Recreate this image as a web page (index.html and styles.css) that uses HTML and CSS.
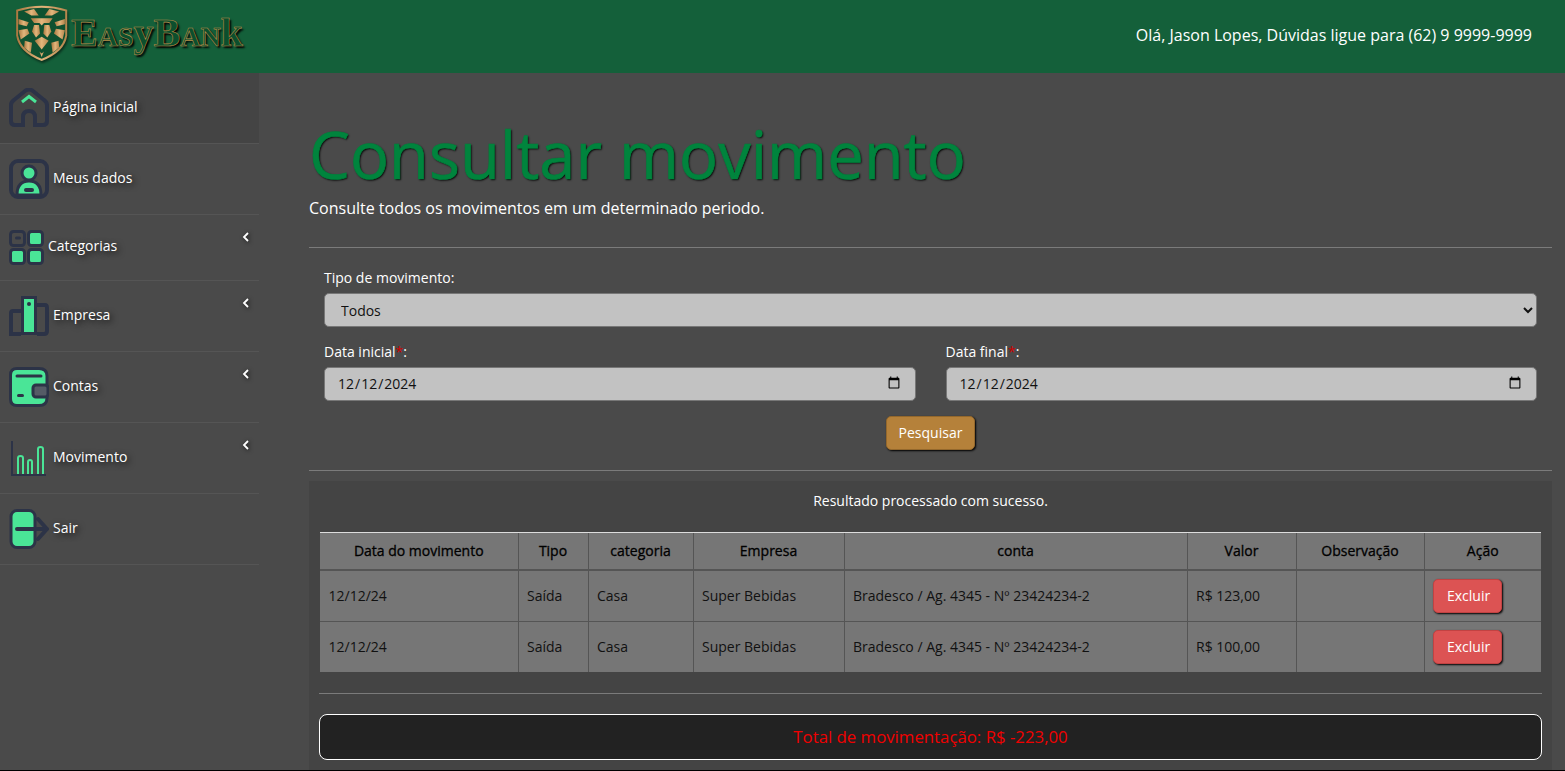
FILE: index.html
```html
<!DOCTYPE html>
<html lang="pt-BR">
<head>
    <meta charset="UTF-8">
    <meta name="viewport" content="width=device-width, initial-scale=1.0">
    <title>EasyBank - Consultar movimento</title>
    <link rel="stylesheet" href="styles.css">
</head>
<body>
    <header class="topbar">
        <a class="brand" href="#">
            <svg class="brand-shield" viewBox="15 15 165 175">
                <defs>
                    <linearGradient id="gold" x1="0" y1="0" x2="1" y2="0">
                        <stop offset="0" stop-color="#a9773f"/>
                        <stop offset="0.5" stop-color="#e3b67c"/>
                        <stop offset="1" stop-color="#b5854c"/>
                    </linearGradient>
                </defs>
                <path d="M18 32 Q95 8 172 32 L172 110 Q165 160 95 187 Q25 160 18 110Z" fill="url(#gold)"/>
                <path d="M24 37 Q95 16 166 37 L166 110 Q158 155 95 180 Q32 155 24 110Z" fill="#0f5130"/>
                <g fill="url(#gold)">
                    <path d="M42 38 L72 30 L86 50 L64 50Z"/>
                    <path d="M148 38 L118 30 L104 50 L126 50Z"/>
                    <path d="M25 60 L56 70 L50 82 L25 76Z"/>
                    <path d="M165 60 L134 70 L140 82 L165 76Z"/>
                    <path d="M25 94 L52 90 L58 104 L32 122Z"/>
                    <path d="M165 94 L138 90 L132 104 L158 122Z"/>
                    <path d="M62 58 H128 L118 72 H102 L95 80 L88 72 H72Z"/>
                    <path d="M72 78 H87 L90 104 L78 116 L66 98Z"/>
                    <path d="M118 78 H103 L100 104 L112 116 L124 98Z"/>
                    <path d="M74 126 L95 114 L116 126 L95 152Z"/>
                    <path d="M44 126 L66 132 L62 162 L42 146Z"/>
                    <path d="M146 126 L124 132 L128 162 L148 146Z"/>
                    <path d="M88 158 L95 175 L102 158 L95 164Z"/>
                </g>
            </svg>
            <span class="brand-text">Eas<span class="brand-low">y</span>Ban<span class="brand-low">k</span></span>
        </a>
        <p class="topbar-msg">Olá, Jason Lopes, Dúvidas ligue para (62) 9 9999-9999</p>
    </header>

    <div class="page">
        <nav class="sidebar">
            <a class="nav-item active" href="#">
                <svg class="nav-icon" viewBox="0 0 40 40">
                    <path class="ln" d="M14 37 H6 Q2 37 2 33 V17 Q2 14 5 12 L16 3 Q20 0 24 3 L35 12 Q38 14 38 17 V33 Q38 37 34 37 H26 V29 Q26 23 20 23 Q14 23 14 29Z"/>
                    <path class="ln-green" d="M13 14 L20 8.500 L27 14"/>
                </svg>
                <span class="nav-text">Página inicial</span>
            </a>
            <a class="nav-item" href="#">
                <svg class="nav-icon" viewBox="0 0 40 40">
                    <rect class="ln" x="2" y="2" width="36" height="36" rx="7"/>
                    <path class="fill-green" d="M8 36 Q8 22 20 22 Q32 22 32 36Z" stroke="#2c3347" stroke-width="3"/>
                    <circle class="fill-green" cx="20" cy="14" r="7" stroke="#2c3347" stroke-width="3"/>
                    <rect class="fill-dark" x="15" y="29" width="10" height="4" rx="2"/>
                </svg>
                <span class="nav-text">Meus dados</span>
            </a>
            <a class="nav-item short" href="#">
                <svg class="nav-icon small" viewBox="0 0 35 35">
                    <rect class="ln thin" x="1.500" y="1.500" width="14" height="14" rx="3"/>
                    <rect class="fill-dark" x="6" y="6.500" width="6" height="3" rx="1.500"/>
                    <rect class="fill-green ln-dark" x="19.500" y="1.500" width="14" height="14" rx="3"/>
                    <rect class="fill-green ln-dark" x="1.500" y="19.500" width="14" height="14" rx="3"/>
                    <rect class="fill-green ln-dark" x="19.500" y="19.500" width="14" height="14" rx="3"/>
                </svg>
                <span class="nav-text">Categorias</span>
                <svg class="nav-arrow" viewBox="0 0 8 10"><path d="M6 1 L2 5 L6 9"/></svg>
            </a>
            <a class="nav-item" href="#">
                <svg class="nav-icon" viewBox="0 0 40 40">
                    <path class="ln" d="M12 15 H4 Q2 15 2 17 V38 H12"/>
                    <path class="ln" d="M28 9 H36 Q38 9 38 12 V35 Q38 38 35 38 H28"/>
                    <rect class="fill-green" x="13.500" y="1.500" width="13" height="36" stroke="#2c3347" stroke-width="3"/>
                    <circle class="fill-dark" cx="20" cy="8" r="2"/>
                </svg>
                <span class="nav-text">Empresa</span>
                <svg class="nav-arrow" viewBox="0 0 8 10"><path d="M6 1 L2 5 L6 9"/></svg>
            </a>
            <a class="nav-item" href="#">
                <svg class="nav-icon" viewBox="0 0 40 40">
                    <path class="fill-green" d="M8 1.500 H30 Q38 1.500 38 9 V31 Q38 38.500 30 38.500 H8 Q1.500 38.500 1.500 32 V8 Q1.500 1.500 8 1.500Z" stroke="#2c3347" stroke-width="3"/>
                    <path class="ln thin" d="M8 9 H32" stroke-linecap="round"/>
                    <rect x="24" y="18" width="15" height="12" rx="3" fill="#555b66" stroke="#2c3347" stroke-width="3"/>
                    <rect class="fill-dark" x="8" y="27" width="7" height="3" rx="1.500"/>
                </svg>
                <span class="nav-text">Contas</span>
                <svg class="nav-arrow" viewBox="0 0 8 10"><path d="M6 1 L2 5 L6 9"/></svg>
            </a>
            <a class="nav-item" href="#">
                <svg class="nav-icon" viewBox="0 0 40 40">
                    <path class="ln axis" d="M3 3 V37 H37"/>
                    <path class="ln-green arch" d="M9 36 V20 Q9 18 11.500 18 Q14 18 14 20 V36"/>
                    <path class="ln-green arch" d="M19 36 V24 Q19 22 21 22 Q23 22 23 24 V36"/>
                    <path class="ln-green arch" d="M29 36 V11 Q29 9 31.500 9 Q34 9 34 11 V36"/>
                </svg>
                <span class="nav-text">Movimento</span>
                <svg class="nav-arrow" viewBox="0 0 8 10"><path d="M6 1 L2 5 L6 9"/></svg>
            </a>
            <a class="nav-item" href="#">
                <svg class="nav-icon" viewBox="0 0 40 40">
                    <rect class="fill-green" x="2" y="1.500" width="24" height="37" rx="6" stroke="#2c3347" stroke-width="3"/>
                    <path class="ln" d="M8 20 H38 M29 10 L38 20 L29 30" stroke-linecap="round" stroke-linejoin="round"/>
                </svg>
                <span class="nav-text">Sair</span>
            </a>
        </nav>

        <main class="content">
            <h1 class="title">Consultar movimento</h1>
            <p class="subtitle">Consulte todos os movimentos em um determinado periodo.</p>
            <hr class="rule rule-head">

            <form class="filter">
                <label class="field-label" for="tipo">Tipo de movimento:</label>
                <select class="field" id="tipo">
                    <option>Todos</option>
                </select>
                <div class="date-row">
                    <div>
                        <label class="field-label" for="inicio">Data inicial<span class="req">*</span>:</label>
                        <input class="field field-date" id="inicio" type="date" value="2024-12-12">
                    </div>
                    <div>
                        <label class="field-label" for="fim">Data final<span class="req">*</span>:</label>
                        <input class="field field-date" id="fim" type="date" value="2024-12-12">
                    </div>
                </div>
                <div class="filter-actions">
                    <button class="btn btn-search" type="submit">Pesquisar</button>
                </div>
            </form>
            <hr class="rule rule-form">

            <section class="result">
                <p class="result-msg">Resultado processado com sucesso.</p>
                <table class="moves">
                    <colgroup>
                        <col class="c-date"><col class="c-type"><col class="c-cat"><col class="c-comp">
                        <col class="c-acc"><col class="c-val"><col class="c-obs"><col class="c-act">
                    </colgroup>
                    <thead>
                        <tr>
                            <th>Data do movimento</th>
                            <th>Tipo</th>
                            <th>categoria</th>
                            <th>Empresa</th>
                            <th>conta</th>
                            <th>Valor</th>
                            <th>Observação</th>
                            <th>Ação</th>
                        </tr>
                    </thead>
                    <tbody>
                        <tr>
                            <td>12/12/24</td>
                            <td>Saída</td>
                            <td>Casa</td>
                            <td>Super Bebidas</td>
                            <td>Bradesco / Ag. 4345 - Nº 23424234-2</td>
                            <td>R$ 123,00</td>
                            <td></td>
                            <td><button class="btn btn-del" type="button">Excluir</button></td>
                        </tr>
                        <tr>
                            <td>12/12/24</td>
                            <td>Saída</td>
                            <td>Casa</td>
                            <td>Super Bebidas</td>
                            <td>Bradesco / Ag. 4345 - Nº 23424234-2</td>
                            <td>R$ 100,00</td>
                            <td></td>
                            <td><button class="btn btn-del" type="button">Excluir</button></td>
                        </tr>
                    </tbody>
                </table>
                <hr class="rule rule-total">
                <div class="total">Total de movimentação: R$ -223,00</div>
            </section>
        </main>
    </div>
</body>
</html>
```

FILE: styles.css
```css
/* Global Styles */
* {
    box-sizing: border-box;
}

html, body {
    height: 100%;
}

body {
    display: flex;
    flex-direction: column;
    margin: 0;
    height: 771px;
    overflow: hidden;
    font-family: "Open Sans", sans-serif;
    font-size: 14px;
    line-height: 21px;
    color: #fff;
    background-color: #4a4a4a;
    border-bottom: 1px solid #000;
}

/* Top bar */
.topbar {
    display: flex;
    flex: none;
    align-items: center;
    justify-content: space-between;
    height: 73px;
    padding: 0 33px 0 15px;
    background-color: #14603a;
}

.brand {
    display: flex;
    align-items: center;
    text-decoration: none;
    margin-top: -7px;
}

.brand-shield {
    width: 55px;
    height: 58px;
    filter: drop-shadow(1px 2px 1px rgba(0,0,0,0.5));
}

.brand-text {
    margin-left: 1px;
    font-family: "Liberation Serif", serif;
    font-size: 40px;
    font-weight: 700;
    line-height: 46px;
    font-variant: small-caps;
    color: #0c4f2d;
    -webkit-text-stroke: 0.6px #b78d4a;
    text-shadow: 2px 2px 2px #000;
}

.brand-low {
    font-variant: normal;
}

.topbar-msg {
    margin: 0 0 2px;
    font-size: 16px;
}

/* Sidebar */
.page {
    display: flex;
    flex: 1;
    min-height: 0;
}

.sidebar {
    flex: none;
    width: 259px;
}

.nav-item {
    display: flex;
    align-items: center;
    gap: 4px;
    height: 71px;
    padding-left: 9px;
    color: #fff;
    text-decoration: none;
    text-shadow: 2px 2px 6px rgba(0,0,0,0.8);
    border-bottom: 1px solid #555;
}

.nav-item.active {
    background-color: #444;
}

.nav-item.short {
    height: 66px;
}

.nav-text {
    padding-bottom: 4px;
}

.nav-icon {
    flex: none;
    width: 40px;
    height: 40px;
}

.nav-icon.small {
    width: 35px;
    height: 35px;
}

.nav-arrow {
    align-self: flex-start;
    width: 8px;
    height: 10px;
    margin: 17px 9px 0 auto;
    fill: none;
    stroke: #fff;
    stroke-width: 1.8;
    filter: drop-shadow(1px 1px 2px rgba(0,0,0,0.7));
}

.ln {
    fill: none;
    stroke: #2c3347;
    stroke-width: 4;
}

.ln.thin {
    stroke-width: 3;
}

.ln.axis {
    stroke-width: 2;
}

.ln-green {
    fill: none;
    stroke: #4ae597;
    stroke-width: 3;
}

.ln-green.arch {
    stroke-width: 2;
}

.ln-dark {
    stroke: #2c3347;
    stroke-width: 3;
}

.fill-green {
    fill: #4ae597;
}

.fill-dark {
    fill: #2c3347;
}

/* Content */
.content {
    flex: 1;
    min-width: 0;
    padding: 42px 13px 0 50px;
}

.title {
    margin: 0;
    font-size: 65px;
    font-weight: 400;
    line-height: 78px;
    color: #00843d;
    -webkit-text-stroke: 0.7px #00843d;
    text-shadow: 1px 1px 2px #000;
}

.subtitle {
    margin: 3px 0 0;
    font-size: 16px;
    line-height: 24px;
}

.rule {
    margin: 0;
    border: 0;
    border-top: 1px solid #7b7b7b;
}

.rule-head {
    margin-top: 27px;
}

.rule-form {
    margin-top: 20px;
}

.rule-total {
    margin: 21px 0 20px;
}

/* Filter form */
.filter {
    padding: 19px 15px 0;
}

.field-label {
    display: block;
    margin-bottom: 5px;
}

.req {
    color: #d00000;
}

.field {
    display: block;
    width: 100%;
    height: 34px;
    padding: 0 12px;
    font-family: inherit;
    font-size: 14px;
    color: #111;
    background-color: #c2c2c2;
    border: 1px solid #777;
    border-radius: 5px;
}

.field-date {
    padding-bottom: 2px;
}

.date-row {
    display: grid;
    grid-template-columns: 1fr 1fr;
    gap: 30px;
    margin-top: 14px;
}

.filter-actions {
    display: flex;
    justify-content: center;
    margin-top: 15px;
}

.btn {
    height: 34px;
    font-family: inherit;
    font-size: 14px;
    color: #fff;
    border-radius: 5px;
    cursor: pointer;
    box-shadow: 1px 1px 2px #000;
}

.btn-search {
    padding: 0 12px 2px;
    background-color: #b5813a;
    border: 1px solid #94682c;
}

.btn-del {
    padding: 0 11px 0 13px;
    background-color: #dc5353;
    border: 1px solid #c24242;
}

/* Result panel */
.result {
    margin-top: 10px;
    height: 290px;
    padding: 9px 10px 10px;
    background-color: #444;
}

.result-msg {
    margin: 0 0 21px;
    text-align: center;
}

.moves {
    width: 1221px;
    margin: 0 1px;
    table-layout: fixed;
    border-collapse: collapse;
    color: #111;
    background-color: #767676;
}

.c-date { width: 198px; }
.c-type { width: 70px; }
.c-cat { width: 105px; }
.c-comp { width: 151px; }
.c-acc { width: 343px; }
.c-val { width: 109px; }
.c-obs { width: 128px; }
.c-act { width: 117px; }

.moves th {
    height: 37px;
    padding: 0 8px;
    font-weight: 400;
    color: #000;
    text-align: center;
    -webkit-text-stroke: 0.3px #000;
    border-top: 1px solid #ddd;
    border-left: 1px solid #555;
    border-bottom: 2px solid #555;
}

.moves td {
    padding: 8px 8px 8px 8.5px;
    border-left: 1px solid #555;
    border-bottom: 1px solid #555;
}

.moves th:first-child,
.moves td:first-child {
    border-left: 0;
}

.moves tr:last-child td {
    border-bottom: 0;
}

.total {
    height: 46px;
    font-size: 16.8px;
    line-height: 44px;
    color: #f00000;
    text-align: center;
    background-color: #222;
    border: 1px solid #fff;
    border-radius: 8px;
}
```
